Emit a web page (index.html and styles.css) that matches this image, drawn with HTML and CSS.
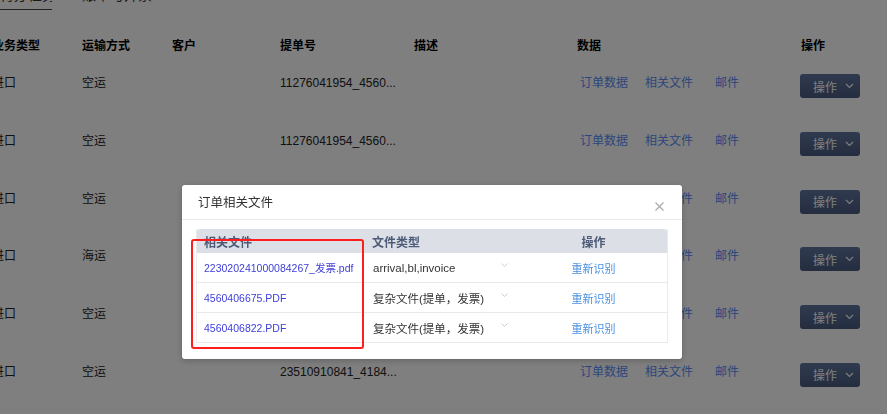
FILE: index.html
```html
<!DOCTYPE html>
<html lang="zh-CN">
<head>
<meta charset="utf-8">
<title>订单相关文件</title>
<link rel="stylesheet" href="styles.css">
</head>
<body>
<div class="page">
  <div class="tabs">
    <div class="tab tab-active">待办任务</div>
    <div class="tab">账单与开票</div>
  </div>
  <div class="grid thead">
    <div>业务类型</div><div>运输方式</div><div>客户</div><div>提单号</div><div>描述</div><div>数据</div><div>操作</div>
  </div>
  <div class="grid trow">
    <div>进口</div><div>空运</div><div></div><div>11276041954_4560...</div><div></div>
    <div class="links"><span>订单数据</span><span>相关文件</span><span>邮件</span></div>
    <div><button class="op">操作<svg width="9" height="6" viewBox="0 0 9 6"><path d="M1 1l3.5 3.5L8 1" fill="none" stroke="#fff" stroke-width="1.1"/></svg></button></div>
  </div>
  <div class="grid trow">
    <div>进口</div><div>空运</div><div></div><div>11276041954_4560...</div><div></div>
    <div class="links"><span>订单数据</span><span>相关文件</span><span>邮件</span></div>
    <div><button class="op">操作<svg width="9" height="6" viewBox="0 0 9 6"><path d="M1 1l3.5 3.5L8 1" fill="none" stroke="#fff" stroke-width="1.1"/></svg></button></div>
  </div>
  <div class="grid trow">
    <div>进口</div><div>空运</div><div></div><div>11276041954_4560...</div><div></div>
    <div class="links"><span>订单数据</span><span>相关文件</span><span>邮件</span></div>
    <div><button class="op">操作<svg width="9" height="6" viewBox="0 0 9 6"><path d="M1 1l3.5 3.5L8 1" fill="none" stroke="#fff" stroke-width="1.1"/></svg></button></div>
  </div>
  <div class="grid trow">
    <div>进口</div><div>海运</div><div></div><div>11276041954_4560...</div><div></div>
    <div class="links"><span>订单数据</span><span>相关文件</span><span>邮件</span></div>
    <div><button class="op">操作<svg width="9" height="6" viewBox="0 0 9 6"><path d="M1 1l3.5 3.5L8 1" fill="none" stroke="#fff" stroke-width="1.1"/></svg></button></div>
  </div>
  <div class="grid trow">
    <div>进口</div><div>空运</div><div></div><div>11276041954_4560...</div><div></div>
    <div class="links"><span>订单数据</span><span>相关文件</span><span>邮件</span></div>
    <div><button class="op">操作<svg width="9" height="6" viewBox="0 0 9 6"><path d="M1 1l3.5 3.5L8 1" fill="none" stroke="#fff" stroke-width="1.1"/></svg></button></div>
  </div>
  <div class="grid trow">
    <div>进口</div><div>空运</div><div></div><div>23510910841_4184...</div><div></div>
    <div class="links"><span>订单数据</span><span>相关文件</span><span>邮件</span></div>
    <div><button class="op">操作<svg width="9" height="6" viewBox="0 0 9 6"><path d="M1 1l3.5 3.5L8 1" fill="none" stroke="#fff" stroke-width="1.1"/></svg></button></div>
  </div>
</div>

<div class="mask"></div>

<div class="modal">
  <div class="modal-head">
    <span class="modal-title">订单相关文件</span>
    <svg class="close" width="9" height="9" viewBox="0 0 9 9"><path d="M0.5 0.5l8 8M8.5 0.5l-8 8" stroke="#a8a8a8" stroke-width="1.1"/></svg>
  </div>
  <div class="modal-body">
    <div class="ftable">
      <div class="frow fhead">
        <div class="c1">相关文件</div><div class="c2">文件类型</div><div class="c3">操作</div>
      </div>
      <div class="frow">
        <div class="c1 file">223020241000084267_发票.pdf</div>
        <div class="c2 sel"><span>arrival,bl,invoice</span><svg width="7" height="4" viewBox="0 0 7 4"><path d="M0.5 0.5l3 3 3-3" fill="none" stroke="#c5c8ce" stroke-width="0.9"/></svg></div>
        <div class="c3 redo">重新识别</div>
      </div>
      <div class="frow">
        <div class="c1 file">4560406675.PDF</div>
        <div class="c2 sel"><span>复杂文件(提单，发票)</span><svg width="7" height="4" viewBox="0 0 7 4"><path d="M0.5 0.5l3 3 3-3" fill="none" stroke="#c5c8ce" stroke-width="0.9"/></svg></div>
        <div class="c3 redo">重新识别</div>
      </div>
      <div class="frow last">
        <div class="c1 file">4560406822.PDF</div>
        <div class="c2 sel"><span>复杂文件(提单，发票)</span><svg width="7" height="4" viewBox="0 0 7 4"><path d="M0.5 0.5l3 3 3-3" fill="none" stroke="#c5c8ce" stroke-width="0.9"/></svg></div>
        <div class="c3 redo">重新识别</div>
      </div>
      <div class="annot"></div>
    </div>
  </div>
</div>
</body>
</html>
```

FILE: styles.css
```css
html, body {
  margin: 0;
  padding: 0;
  background: #fff;
  overflow: hidden;
}
body {
  font-family: "Liberation Sans", "Noto Sans CJK SC", sans-serif;
  font-size: 12px;
  color: #222;
  width: 887px;
  height: 414px;
}
.page {
  margin-top: -15px;
}
.tabs {
  display: flex;
  gap: 30px;
  font-size: 14px;
}
.tab {
  line-height: 20px;
  padding-bottom: 5px;
  color: #333;
}
.tab-active {
  width: 52px;
  border-bottom: 1px solid #444;
  padding-bottom: 4px;
  overflow: hidden;
  white-space: nowrap;
}
.grid {
  display: grid;
  grid-template-columns: 90px 90px 108px 134px 163px 224px 86px;
  margin-left: -8px;
}
.thead {
  margin-top: 24px;
  height: 24px;
  line-height: 24px;
  font-weight: bold;
  color: #000;
}
.trow {
  height: 57.75px;
  box-sizing: border-box;
  padding-top: 13px;
  line-height: 24px;
  color: #222;
}
.links {
  display: flex;
  padding-left: 3px;
  color: #5a8cf8;
}
.links span:nth-child(1) { width: 65px; }
.links span:nth-child(2) { width: 70px; }
.op {
  margin-top: 3px;
  margin-left: -1px;
  width: 60px;
  height: 24px;
  border: 0;
  border-radius: 3px;
  background: linear-gradient(#60759e, #4a5b7f);
  color: #fff;
  font-family: "Liberation Sans", "Noto Sans CJK SC", sans-serif;
  font-size: 12px;
  display: flex;
  align-items: center;
  padding: 0 0 0 13px;
  gap: 8px;
}
.mask {
  position: fixed;
  inset: 0;
  background: rgba(0, 0, 0, 0.5);
}
.modal {
  position: fixed;
  left: 182px;
  top: 185px;
  width: 500px;
  height: 174px;
  background: #fff;
  border-radius: 3px;
  box-shadow: 0 2px 6px rgba(0, 0, 0, 0.2);
  font-family: "Liberation Sans", "Noto Sans CJK SC", sans-serif;
  font-size: 11.5px;
  color: #333;
}
.modal-head {
  height: 34px;
  border-bottom: 1px solid #e8eaec;
  display: flex;
  align-items: center;
  justify-content: space-between;
  padding: 0 18px 0 16px;
}
.modal-title {
  font-size: 12.5px;
  color: #333;
  margin-top: -1px;
}
.close {
  margin-top: 8px;
}
.modal-body {
  padding: 9px 14px 0 14px;
}
.ftable {
  position: relative;
  border: 1px solid #e8eaec;
  border-top: 0;
}
.frow {
  display: grid;
  grid-template-columns: 167px 156px 147px;
  height: 30px;
  align-items: center;
  border-bottom: 1px solid #e8eaec;
  box-sizing: border-box;
}
.frow.last {
  border-bottom: 0;
  height: 29px;
}
.fhead {
  height: 24px;
  background: #dcdfe6;
  color: #4d5b78;
  font-size: 12px;
  font-weight: 600;
  border-bottom: 0;
  border-radius: 3px 3px 0 0;
}
.c1 { padding-left: 7px; white-space: nowrap; }
.c2 { padding-left: 9px; }
.c3 { text-align: center; }
.fhead .c2 { padding-left: 8px; }
.file { color: #4040d8; font-size: 10.5px; }
.sel {
  display: flex;
  align-items: center;
  justify-content: space-between;
  padding-right: 12px;
}
.sel svg { margin-top: -5px; }
.redo { color: #4a90e2; font-size: 11px; }
.annot {
  position: absolute;
  left: -6px;
  top: 10px;
  width: 169px;
  height: 106px;
  border: 2px solid #ff1e1e;
  border-radius: 3px;
  pointer-events: none;
}
```
